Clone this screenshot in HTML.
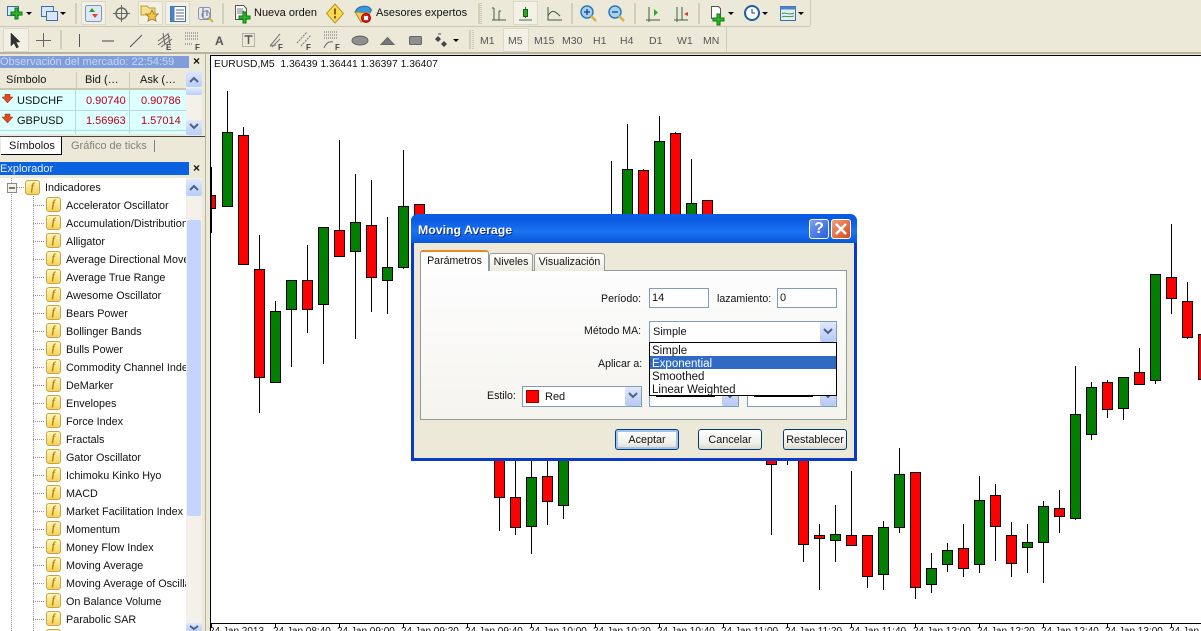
<!DOCTYPE html>
<html><head><meta charset="utf-8"><title>MetaTrader</title>
<style>
html,body{margin:0;padding:0;background:#ECE9D8}
#w{position:relative;width:1201px;height:631px;overflow:hidden;font:11px/13px "Liberation Sans",sans-serif;color:#111}
.a{position:absolute}
.t{position:absolute;white-space:pre;line-height:13px}
.d{font-size:10.6px}
.x{font-size:10px}
.m{color:#555;font-size:10.5px}
.r{height:18px;position:relative;white-space:pre;line-height:20px;padding-left:66px;font-size:10.8px}
.f{position:absolute;display:block;width:13px;height:13px;border:1px solid #c9a24a;border-radius:3px;background:linear-gradient(#fff6b8,#f5d25c);font:italic bold 11px/13px "Liberation Serif",serif;color:#b8860b;text-align:center}
.r .f{left:46px;top:1px}
.sb{position:absolute;width:16px;height:16px;border-radius:2px;background:linear-gradient(#dfe9fd,#b9cdf8);border:0}
.btn{position:absolute;height:19px;border:1px solid #003C74;border-radius:3px;background:linear-gradient(#fff,#f0efe8 70%,#dcd8c8);text-align:center;line-height:21px;box-sizing:content-box;font-size:10.8px}
.inp{position:absolute;background:#fff;border:1px solid #7F9DB9;box-sizing:border-box}
.arr{position:absolute;width:16px;background:linear-gradient(#dfe8fc,#b5c8f5);border-radius:2px}
.tab{position:absolute;background:linear-gradient(#fff,#ecebe0);border:1px solid #919B9C;border-bottom:0;border-radius:3px 3px 0 0;text-align:center;box-sizing:border-box;font-size:10.6px}
</style></head><body><div id="w">

<!-- toolbar background -->
<div class="a" style="left:0;top:0;width:1201px;height:54px;background:#ECE9D8"></div>
<div class="a" style="left:0;top:26px;width:810px;height:1px;background:#c9c5b0"></div>
<div class="a" style="left:810px;top:0;width:1px;height:26px;background:#cfcbb8"></div>
<div class="a" style="left:726px;top:27px;width:1px;height:26px;background:#cfcbb8"></div>
<div class="a" style="left:0;top:52px;width:1201px;height:2px;background:#b8b4a0"></div>

<!-- chart -->
<div class="a" style="left:205px;top:54px;width:5px;height:577px;background:#ECE9D8;border-left:1px solid #b8b4a0;box-sizing:border-box"></div>
<div class="a" style="left:210px;top:55px;width:991px;height:576px;background:#fff;border-left:1px solid #000;border-top:1px solid #000;box-sizing:border-box"></div>

<svg class="a" style="left:0;top:0" width="1201" height="631" viewBox="0 0 1201 631" shape-rendering="crispEdges">
<g stroke="#000" fill="none">
<path d="M211.500 167V233M227.500 91V132M243.500 127V135M259.500 235V413M275.500 301V311M291.500 280V367M307.500 245V333M323.500 227V364M339.500 140V230M355.500 174V339M371.500 180V312M387.500 217V314M403.500 150V269M611.500 161V215M627.500 124V169M643.500 169V215M659.500 116V141M675.500 132V215M691.500 159V203"/>
<path d="M499.500 460V531M515.500 461V535M531.500 461V554M547.500 461V525M563.500 461V519M771.500 461V535M787.500 461V465M803.500 461V562M819.500 524V590M835.500 505V562M851.500 471V535M867.500 576V588M883.500 521V590M899.500 448V533M915.500 472V599M931.500 553V593M947.500 543V572M963.500 524V577M979.500 476V573M995.500 484V561M1011.500 522V577M1027.500 524V573M1043.500 501V583M1059.500 490V533M1075.500 366V520M1091.500 382V440M1107.500 380V418M1123.500 377V420M1139.500 348V372M1155.500 274V384M1171.500 224V314M1187.500 282V339"/>
</g>
<!-- green bodies -->
<path fill="#007f00" stroke="#000" d="M222.500 132.500h10v74h-10zM270.500 311.500h10v71h-10zM286.500 280.500h10v29h-10zM318.500 227.500h10v77h-10zM350.500 222.500h10v29h-10zM382.500 267.500h10v13h-10zM398.500 206.500h10v61h-10zM622.500 169.500h10v50h-10zM654.500 141.500h10v80h-10zM686.500 203.500h10v20h-10zM526.500 477.500h10v49h-10zM558.500 450.500h10v55h-10zM830.500 534.500h10v6h-10zM878.500 527.500h10v47h-10zM894.500 474.500h10v53h-10zM926.500 568.500h10v16h-10zM942.500 550.500h10v14h-10zM974.500 500.500h10v64h-10zM1022.500 542.500h10v5h-10zM1038.500 506.500h10v36h-10zM1070.500 414.500h10v104h-10zM1086.500 387.500h10v47h-10zM1118.500 377.500h10v31h-10zM1150.500 274.500h10v106h-10z"/>
<!-- red bodies -->
<path fill="#f00" stroke="#000" d="M211.500 195.500h4v13h-4zM238.500 135.500h10v129h-10zM254.500 269.500h10v108h-10zM302.500 280.500h10v29h-10zM334.500 230.500h10v26h-10zM366.500 225.500h10v52h-10zM414.500 204.500h10v30h-10zM638.500 170.500h10v50h-10zM670.500 133.500h10v90h-10zM702.500 200.500h10v20h-10zM494.500 450.500h10v47h-10zM510.500 497.500h10v30h-10zM542.500 476.500h10v25h-10zM766.500 450.500h10v14h-10zM798.500 450.500h10v94h-10zM814.500 535.500h10v3h-10zM846.500 535.500h10v10h-10zM862.500 535.500h10v41h-10zM910.500 472.500h10v115h-10zM958.500 548.500h10v20h-10zM990.500 495.500h10v31h-10zM1006.500 535.500h10v28h-10zM1054.500 508.500h10v8h-10zM1102.500 382.500h10v27h-10zM1134.500 372.500h10v12h-10zM1166.500 277.500h10v21h-10zM1182.500 301.500h10v36h-10zM1198.500 334.500h10v45h-10z"/>
<!-- axis -->
<path stroke="#000" fill="none" d="M211 623.500H1201M211.500 623V628M275.500 623V628M339.500 623V628M403.500 623V628M467.500 623V628M531.500 623V628M595.500 623V628M659.500 623V628M723.500 623V628M787.500 623V628M851.500 623V628M915.500 623V628M979.500 623V628M1043.500 623V628M1107.500 623V628M1171.500 623V628"/>
</svg>

<div class="t" style="left:214px;top:58px;font-size:10.3px">EURUSD,M5  1.36439 1.36441 1.36397 1.36407</div>
<div class="t x" style="left:209px;top:625px">24 Jan 2013</div>
<div class="t x" style="left:273px;top:625px">24 Jan 08:40</div>
<div class="t x" style="left:337px;top:625px">24 Jan 09:00</div>
<div class="t x" style="left:401px;top:625px">24 Jan 09:20</div>
<div class="t x" style="left:465px;top:625px">24 Jan 09:40</div>
<div class="t x" style="left:529px;top:625px">24 Jan 10:00</div>
<div class="t x" style="left:593px;top:625px">24 Jan 10:20</div>
<div class="t x" style="left:657px;top:625px">24 Jan 10:40</div>
<div class="t x" style="left:721px;top:625px">24 Jan 11:00</div>
<div class="t x" style="left:785px;top:625px">24 Jan 11:20</div>
<div class="t x" style="left:849px;top:625px">24 Jan 11:40</div>
<div class="t x" style="left:913px;top:625px">24 Jan 12:00</div>
<div class="t x" style="left:977px;top:625px">24 Jan 12:20</div>
<div class="t x" style="left:1041px;top:625px">24 Jan 12:40</div>
<div class="t x" style="left:1105px;top:625px">24 Jan 13:00</div>
<div class="t x" style="left:1169px;top:625px">24 Jan 13:20</div>

<!-- toolbar icons -->
<svg class="a" style="left:0;top:0" width="830" height="54" viewBox="0 0 830 54">
<!-- pressed buttons -->
<g fill="#f3f1e6" stroke="#dcd8c6">
<rect x="81.500" y="1.500" width="24" height="23"/><rect x="138.500" y="1.500" width="24" height="23"/><rect x="165.500" y="1.500" width="24" height="23"/><rect x="513.500" y="1.500" width="24" height="23"/>
<rect x="3.500" y="28.500" width="25" height="23"/><rect x="503.500" y="28.500" width="25" height="23"/>
</g>
<!-- separators -->
<g stroke="#b8b4a0"><path d="M76 3V24M223 3V24M479 3V24M572 3V24M635 3V24M699 3V24M61 30V49M470 30V49"/></g>
<path stroke="#aaa68f" stroke-dasharray="1 1" d="M481 3V24M473 30V49"/>
<!-- new chart -->
<g fill="#d8e6f6" stroke="#3a6ea5"><rect x="7.500" y="6.500" width="11" height="9"/></g>
<path d="M15 8h3v4h4v3h-4v4h-3v-4h-4v-3h4z" fill="#2fb52f" stroke="#0a7a0a"/>
<path d="M26 12h6l-3 3z" fill="#000"/>
<!-- profile -->
<g fill="#d8e6f6" stroke="#3a6ea5"><rect x="41.500" y="6.500" width="12" height="10"/><rect x="46.500" y="11.500" width="11" height="9"/></g>
<path d="M60 12h6l-3 3z" fill="#000"/>
<!-- market watch -->
<rect x="85.500" y="5.500" width="16" height="16" rx="2" fill="#dfe8f6" stroke="#7f95b5"/>
<path d="M92 8l3 4h-6z" fill="#2a9a2a"/><path d="M95 18l3-4h-6z" fill="#e0452f"/>
<!-- crosshair -->
<circle cx="121.500" cy="13.500" r="5.500" fill="none" stroke="#666" stroke-width="1.500"/><path d="M121.500 5V22M113 13.500H130" stroke="#666"/>
<!-- folder star -->
<path d="M141 6h6l2 2h6v7h-14z" fill="#f6e08c" stroke="#b99a3a"/><path d="M152 10l2 4h4l-3 3 1 4-4-2-4 2 1-4-3-3h4z" fill="#f4c842" stroke="#a5842a"/>
<!-- navigator -->
<rect x="170.500" y="6.500" width="15" height="15" fill="#fff" stroke="#3a6ea5"/><rect x="170.500" y="6.500" width="4" height="15" fill="#4a82c8"/><path d="M176 10h8M176 13h8M176 16h8M176 19h8" stroke="#667"/>
<!-- tester search -->
<rect x="198.500" y="7.500" width="12" height="12" rx="2" fill="#e4e8f0" stroke="#8a94a8"/><path d="M203 8v10M207 10v6" stroke="#667"/><circle cx="206" cy="15" r="4" fill="none" stroke="#7a86a0"/><path d="M209 18l4 4" stroke="#d8b23e" stroke-width="2"/>
<!-- new order -->
<path d="M235.500 5.500h8l3 3v11h-11z" fill="#fff" stroke="#555"/><path d="M237 9h6M237 11h7M237 13h7" stroke="#777"/>
<path d="M243 12h3v4h4v3h-4v4h-3v-4h-4v-3h4z" fill="#2fb52f" stroke="#0a7a0a"/>
<!-- warning -->
<path d="M335 4l8.500 9.500L335 23l-8.500-9.500z" fill="#fbd94e" stroke="#b8962a"/><path d="M335 8.500V14.500M335 16v2.500" stroke="#8a5a10" stroke-width="2"/>
<!-- experts -->
<path d="M355 12c2-6 12-8 16-3 1 2-1 4-3 4z" fill="#3a9ad9" stroke="#2a6ea5"/><path d="M355 12l6 10 6-2 3-7z" fill="#f0d060" stroke="#a88a30"/><circle cx="366" cy="18" r="4.500" fill="#e02018" stroke="#900"/><rect x="364" y="16" width="4" height="4" fill="#fff"/>
<!-- period bars -->
<g fill="none" stroke="#4a6a4a">
<path d="M492 20H506M494 8V20M494 8h-2M499 11V20M499 11h2" stroke="#3f5f3f"/>
<path d="M519 20H532M525.500 7V18"/>
<path d="M548 7V20H562M548 16c4-8 8-4 12 0" stroke="#3f5f3f"/>
<path d="M649 7V22M646 20H660" stroke="#3f5f3f"/><path d="M677 7V22M674 20H688M682 7V20" stroke="#3f5f3f"/>
</g>
<rect x="523.500" y="9.500" width="4" height="7" fill="#2fa52f" stroke="#0a6a0a"/>
<path d="M654 9l4 3.500-4 3.500z" fill="#2fa52f"/><path d="M688 12l-4 2 4 2z" fill="#d0402a"/>
<!-- zoom -->
<circle cx="587" cy="12" r="6" fill="#a9d0f2" stroke="#2a7ab5" stroke-width="1.500"/><path d="M584 12h6M587 9v6" stroke="#1a5a95" stroke-width="1.500"/><path d="M591 16l5 5" stroke="#d8b23e" stroke-width="2.500"/>
<circle cx="615" cy="12" r="6" fill="#a9d0f2" stroke="#2a7ab5" stroke-width="1.500"/><path d="M612 12h6" stroke="#1a5a95" stroke-width="1.500"/><path d="M619 16l5 5" stroke="#d8b23e" stroke-width="2.500"/>
<!-- indicator add -->
<path d="M711.500 6.500h7l2 2v10h-9z" fill="#fff" stroke="#555"/><path d="M717 14h3v4h4v3h-4v4h-3v-4h-4v-3h4z" fill="#2fb52f" stroke="#0a7a0a"/><path d="M728 12h6l-3 3z" fill="#000"/>
<!-- clock -->
<circle cx="752" cy="13" r="7" fill="#fff" stroke="#1f5fa8" stroke-width="2"/><path d="M752 9v4h3" stroke="#334" fill="none"/><path d="M762 12h6l-3 3z" fill="#000"/>
<!-- templates -->
<rect x="780.500" y="6.500" width="15" height="14" fill="#e4eef8" stroke="#3a6ea5"/><rect x="780.500" y="6.500" width="15" height="3" fill="#4a82c8"/><path d="M782 14c3-3 6 2 12-1M782 17c3-2 6 1 12-1" stroke="#3a9a3a" fill="none"/><path d="M798 12h6l-3 3z" fill="#000"/>
<!-- row 2 tools -->
<path d="M11 33v13l3-3 2.500 5 2-1-2.500-5H20z" fill="#333" stroke="#222" stroke-width=".5"/>
<path d="M43.500 33V47M36 40.500H51" stroke="#666"/>
<path d="M79.500 34V47" stroke="#555"/><path d="M102 41H114" stroke="#444"/><path d="M130 47L142 35" stroke="#555"/>
<path d="M158 45l12-9M158 41l10-7M161 47l11-8M163 33l2 12M168 33l2 12" stroke="#666" fill="none"/>
<path d="M185 33h13M185 36h13M185 39h13M185 44h8" stroke="#666" stroke-dasharray="1 1"/>
<rect x="242.500" y="33.500" width="12" height="13" fill="none" stroke="#777" stroke-dasharray="1 1"/><path d="M244.500 36h8M248.500 36v8" stroke="#555" stroke-width="1.500"/>
<path d="M270 46l10-12M272 47l8-8M270 46l6-1" stroke="#777" fill="none"/>
<path d="M297 43l10-11M301 46l10-11" stroke="#777" stroke-dasharray="2 1"/>
<path d="M324 32h14M324 35h14M324 38h14" stroke="#666" stroke-dasharray="1 1"/><path d="M324 48c2-5 5-7 9-6" stroke="#666" fill="none"/>
<ellipse cx="360" cy="40.500" rx="8" ry="4.500" fill="#8f8f8f" stroke="#666"/>
<path d="M381 44.500l6.500-7 6.500 7z" fill="#777" stroke="#666"/>
<rect x="409.500" y="36.500" width="12" height="8" rx="1" fill="#8f8f8f" stroke="#666"/>
<path d="M438 36l3 3-3 3-3-3zM444 41l3 3-3 3-3-3z" fill="#444"/><path d="M438 34h3" stroke="#444"/>
<path d="M453 39h6l-3 3z" fill="#000"/>
</svg>

<div class="t" style="left:254px;top:7px;font-size:11px">Nueva orden</div>
<div class="t" style="left:376px;top:7px;font-size:11px">Asesores expertos</div>
<div class="t" style="left:215px;top:35px;font-size:12px;font-weight:bold;color:#555">A</div>
<div class="t" style="left:278px;top:41px;font-size:8px;font-weight:bold;color:#444">F</div>
<div class="t" style="left:306px;top:41px;font-size:8px;font-weight:bold;color:#444">F</div>
<div class="t" style="left:335px;top:41px;font-size:8px;font-weight:bold;color:#444">F</div>
<div class="t" style="left:195px;top:41px;font-size:8px;font-weight:bold;color:#444">F</div>
<div class="t" style="left:166px;top:41px;font-size:8px;font-weight:bold;color:#444">E</div>
<div class="t m" style="left:480px;top:35px">M1</div>
<div class="t m" style="left:508px;top:35px">M5</div>
<div class="t m" style="left:534px;top:35px">M15</div>
<div class="t m" style="left:562px;top:35px">M30</div>
<div class="t m" style="left:593px;top:35px">H1</div>
<div class="t m" style="left:620px;top:35px">H4</div>
<div class="t m" style="left:649px;top:35px">D1</div>
<div class="t m" style="left:677px;top:35px">W1</div>
<div class="t m" style="left:703px;top:35px">MN</div>

<!-- market watch panel -->
<div class="a" style="left:0;top:56px;width:189px;height:12px;background:#7f9ddb"></div>
<div class="t" style="left:0;top:56px;color:#c9d6f2">Observación del mercado: 22:54:59</div>
<div class="t" style="left:193px;top:55px;font-weight:bold;font-size:12px">×</div>
<div class="a" style="left:0;top:70px;width:186px;height:20px;background:#ECE9D8;border-bottom:2px solid #c9c5b0;box-sizing:border-box"></div>
<div class="a" style="left:76px;top:72px;width:1px;height:16px;background:#cfcbb8"></div>
<div class="a" style="left:129px;top:72px;width:1px;height:16px;background:#cfcbb8"></div>
<div class="t" style="left:6px;top:74px">Símbolo</div>
<div class="t" style="left:85px;top:74px">Bid (…</div>
<div class="t" style="left:140px;top:74px">Ask (…</div>
<div class="a" style="left:0;top:90px;width:186px;height:45px;background:#dcffff"></div>
<div class="a" style="left:0;top:110px;width:186px;height:1px;background:#b8d8e0"></div>
<div class="a" style="left:0;top:130px;width:186px;height:1px;background:#b8d8e0"></div>
<div class="a" style="left:75px;top:90px;width:1px;height:45px;background:#b8d8e0"></div>
<div class="a" style="left:129px;top:90px;width:1px;height:45px;background:#b8d8e0"></div>
<div class="a" style="left:0;top:134px;width:205px;height:2px;background:#ECE9D8"></div>
<svg class="a" style="left:2px;top:94px" width="12" height="30" viewBox="0 0 12 30"><path d="M3 0h5v3h3l-5.500 6L0 3h3zM3 20h5v3h3l-5.500 6L0 23h3z" fill="#e04a20" stroke="#8a2a10" stroke-width=".5"/></svg>
<div class="t" style="left:17px;top:95px">USDCHF</div>
<div class="t" style="left:17px;top:115px">GBPUSD</div>
<div class="t" style="left:86px;top:95px;color:#c00018">0.90740</div>
<div class="t" style="left:141px;top:95px;color:#c00018">0.90786</div>
<div class="t" style="left:86px;top:115px;color:#c00018">1.56963</div>
<div class="t" style="left:141px;top:115px;color:#c00018">1.57014</div>
<div class="a" style="left:186px;top:71px;width:16px;height:64px;background:#f3f1ea"></div>
<div class="sb" style="left:186px;top:71px"></div>
<div class="sb" style="left:186px;top:88px;height:7px"></div>
<div class="sb" style="left:186px;top:120px;height:15px"></div>
<!-- tabs -->
<div class="a" style="left:1px;top:136px;width:60px;height:18px;background:#fff;border-right:1px solid #000;border-bottom:1px solid #000;box-sizing:content-box"></div>
<div class="a" style="left:0;top:136px;width:205px;height:1px;background:#444"></div>
<div class="a" style="left:1px;top:137px;width:60px;height:17px;background:#fff"></div>
<div class="t" style="left:9px;top:140px">Símbolos</div>
<div class="t" style="left:71px;top:140px;color:#808080">Gráfico de ticks</div>
<div class="a" style="left:154px;top:140px;width:1px;height:12px;background:#808080"></div>

<!-- navigator -->
<div class="a" style="left:0;top:162px;width:189px;height:13px;background:#0a62e0"></div>
<div class="t" style="left:0;top:163px;color:#e8f0ff">Explorador</div>
<div class="t" style="left:193px;top:162px;font-weight:bold;font-size:12px">×</div>
<div class="a" style="left:0;top:178px;width:186px;height:453px;background:#fff"></div>
<svg class="a" style="left:0;top:178px" width="186" height="453" viewBox="0 0 186 453">
<path d="M11.500 0V453M33.500 14V453" stroke="#999" stroke-dasharray="1 1"/>
<path d="M17 9.500H25M33 27.500H45M33 45.500H45M33 63.500H45M33 81.500H45M33 99.500H45M33 117.500H45M33 135.500H45M33 153.500H45M33 171.500H45M33 189.500H45M33 207.500H45M33 225.500H45M33 243.500H45M33 261.500H45M33 279.500H45M33 297.500H45M33 315.500H45M33 333.500H45M33 351.500H45M33 369.500H45M33 387.500H45M33 405.500H45M33 423.500H45M33 441.500H45" stroke="#999" stroke-dasharray="1 1"/>
<rect x="7.500" y="5.500" width="9" height="9" fill="#f4f2e8" stroke="#888"/><path d="M9 10h6" stroke="#000"/>
</svg>
<i class="f" style="left:25px;top:180px">f</i>
<div class="t" style="left:45px;top:182px;font-size:10.8px">Indicadores</div>
<div class="a" style="left:0;top:196px;width:186px;height:435px;overflow:hidden">
<div class="r"><i class="f">f</i>Accelerator Oscillator</div>
<div class="r"><i class="f">f</i>Accumulation/Distribution</div>
<div class="r"><i class="f">f</i>Alligator</div>
<div class="r"><i class="f">f</i>Average Directional Movement</div>
<div class="r"><i class="f">f</i>Average True Range</div>
<div class="r"><i class="f">f</i>Awesome Oscillator</div>
<div class="r"><i class="f">f</i>Bears Power</div>
<div class="r"><i class="f">f</i>Bollinger Bands</div>
<div class="r"><i class="f">f</i>Bulls Power</div>
<div class="r"><i class="f">f</i>Commodity Channel Index</div>
<div class="r"><i class="f">f</i>DeMarker</div>
<div class="r"><i class="f">f</i>Envelopes</div>
<div class="r"><i class="f">f</i>Force Index</div>
<div class="r"><i class="f">f</i>Fractals</div>
<div class="r"><i class="f">f</i>Gator Oscillator</div>
<div class="r"><i class="f">f</i>Ichimoku Kinko Hyo</div>
<div class="r"><i class="f">f</i>MACD</div>
<div class="r"><i class="f">f</i>Market Facilitation Index</div>
<div class="r"><i class="f">f</i>Momentum</div>
<div class="r"><i class="f">f</i>Money Flow Index</div>
<div class="r"><i class="f">f</i>Moving Average</div>
<div class="r"><i class="f">f</i>Moving Average of Oscillator</div>
<div class="r"><i class="f">f</i>On Balance Volume</div>
<div class="r"><i class="f">f</i>Parabolic SAR</div>
<div class="r"><i class="f">f</i>Relative Strength Index</div>
</div>
<div class="a" style="left:186px;top:178px;width:16px;height:453px;background:#f3f1ea"></div>
<div class="sb" style="left:186px;top:179px;height:17px"></div>
<div class="a" style="left:187px;top:220px;width:14px;height:296px;background:#c3d5fd;border-radius:2px"></div>
<div class="sb" style="left:186px;top:623px;height:8px"></div>
<svg class="a" style="left:186px;top:71px" width="16" height="560" viewBox="0 0 16 560">
<path d="M4 11l4-4 4 4" fill="none" stroke="#4d6185" stroke-width="2"/>
<path d="M4 53l4 4 4-4M4 119l4-4 4 4" fill="none" stroke="#4d6185" stroke-width="2"/>
<path d="M4 555l4 3 4-3" fill="none" stroke="#4d6185" stroke-width="2"/>
</svg>

<!-- dialog -->
<div class="a" style="left:411px;top:214px;width:446px;height:247px;background:#0a3bc8;border-radius:7px 7px 0 0"></div>
<div class="a" style="left:411px;top:214px;width:446px;height:29px;background:linear-gradient(#0a5ce8,#0a5ae0 20%,#1a74f2 60%,#0a56d8);border-radius:7px 7px 0 0"></div>
<div class="a" style="left:414px;top:243px;width:440px;height:215px;background:#ECE9D8"></div>
<div class="t" style="left:418px;top:224px;color:#fff;font-weight:bold;font-size:12.3px;text-shadow:1px 1px 0 #0a2a90">Moving Average</div>
<div class="a" style="left:809px;top:219px;width:20px;height:20px;border:1px solid #fff;box-sizing:border-box;border-radius:3px;background:linear-gradient(135deg,#7aa0f0,#2a5cd8);color:#fff;font:bold 16px/18px 'Liberation Sans',sans-serif;text-align:center">?</div>
<div class="a" style="left:831px;top:219px;width:20px;height:20px;border:1px solid #fff;box-sizing:border-box;border-radius:3px;background:linear-gradient(135deg,#f0a080,#d84818)"></div>
<svg class="a" style="left:831px;top:219px" width="20" height="20" viewBox="0 0 20 20"><path d="M5 5l10 10M15 5L5 15" stroke="#fff" stroke-width="2.500"/></svg>

<!-- tab pane -->
<div class="a" style="left:420px;top:270px;width:427px;height:150px;border:1px solid #919B9C;box-sizing:border-box;background:linear-gradient(#fdfdfe,#f5f4ee)"></div>
<div class="tab" style="left:489px;top:253px;width:44px;height:18px;line-height:17px">Niveles</div>
<div class="tab" style="left:534px;top:253px;width:71px;height:18px;line-height:17px">Visualización</div>
<div class="a" style="left:420px;top:250px;width:69px;height:21px;background:#fdfdfb;border:1px solid #919B9C;border-top:2px solid #E68B2C;border-bottom:0;border-radius:3px 3px 0 0;box-sizing:border-box;text-align:center;line-height:19px;font-size:10.6px">Parámetros</div>

<div class="t d" style="left:601px;top:293px">Período:</div>
<div class="inp" style="left:649px;top:288px;width:60px;height:20px;padding:3px 2px;line-height:13px">14</div>
<div class="t d" style="left:717px;top:293px">lazamiento:</div>
<div class="inp" style="left:777px;top:288px;width:60px;height:20px;padding:3px 2px;line-height:13px">0</div>
<div class="t d" style="left:584px;top:325px">Método MA:</div>
<div class="inp" style="left:649px;top:321px;width:188px;height:22px;padding:3px 3px;line-height:15px">Simple</div>
<div class="arr" style="left:820px;top:322px;height:20px"></div>
<div class="t d" style="left:598px;top:358px">Aplicar a:</div>

<div class="t d" style="left:487px;top:390px">Estilo:</div>
<div class="inp" style="left:522px;top:386px;width:120px;height:21px"></div>
<div class="a" style="left:526px;top:390px;width:13px;height:13px;background:#f00;border:1px solid #900;box-sizing:border-box"></div>
<div class="t" style="left:545px;top:391px">Red</div>
<div class="arr" style="left:625px;top:387px;height:19px"></div>
<div class="inp" style="left:649px;top:386px;width:90px;height:21px"></div>
<div class="a" style="left:656px;top:394px;width:59px;height:3px;background:#000"></div>
<div class="arr" style="left:722px;top:387px;height:19px"></div>
<div class="inp" style="left:747px;top:386px;width:90px;height:21px"></div>
<div class="a" style="left:754px;top:394px;width:59px;height:3px;background:#000"></div>
<div class="arr" style="left:820px;top:387px;height:19px"></div>
<svg class="a" style="left:620px;top:320px" width="220" height="90" viewBox="0 0 220 90">
<path d="M204 9l4 4 4-4M9 73l4 4 4-4M106 73l4 4 4-4M204 73l4 4 4-4" fill="none" stroke="#4d6185" stroke-width="2"/>
</svg>

<!-- dropdown -->
<div class="a" style="left:649px;top:342px;width:188px;height:54px;background:#fff;border:1px solid #000;box-sizing:border-box"></div>
<div class="a" style="left:650px;top:356px;width:186px;height:13px;background:#316AC5"></div>
<div class="t" style="left:652px;top:345px;font-size:11.5px">Simple</div>
<div class="t" style="left:652px;top:358px;font-size:11.5px;color:#fff">Exponential</div>
<div class="t" style="left:652px;top:371px;font-size:11.5px">Smoothed</div>
<div class="t" style="left:652px;top:384px;font-size:11.5px">Linear Weighted</div>

<!-- buttons -->
<div class="btn" style="left:615px;top:429px;width:62px;box-shadow:inset 0 0 0 2px #a6c2ee">Aceptar</div>
<div class="btn" style="left:698px;top:429px;width:62px">Cancelar</div>
<div class="btn" style="left:783px;top:429px;width:62px">Restablecer</div>
</div></body></html>
